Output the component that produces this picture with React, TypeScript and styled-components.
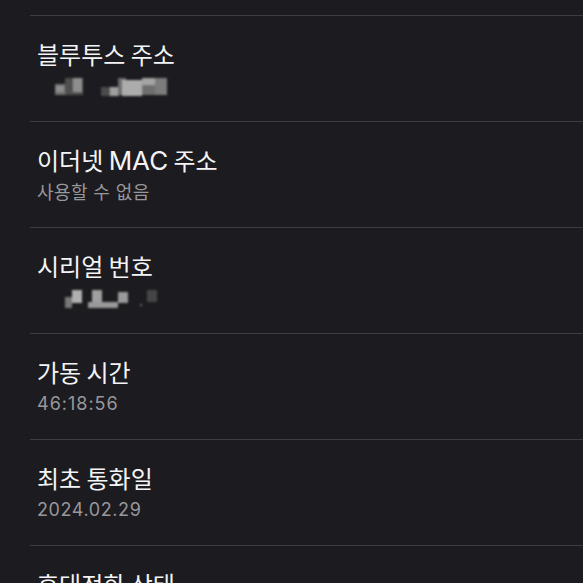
import styled, { createGlobalStyle } from 'styled-components';

const GlobalStyle = createGlobalStyle`
  html, body {
    margin: 0;
    padding: 0;
    background: #1c1b1f;
  }
  body {
    font-family: "Inter", "Noto Sans CJK KR", sans-serif;
    -webkit-font-smoothing: antialiased;
  }
`;

const Screen = styled.div`
  width: 583px;
  height: 583px;
  overflow: hidden;
  background: #1c1b1f;
`;

const List = styled.div`
  padding: 15px 0 0 30px;
  display: flex;
  flex-direction: column;
`;

const Row = styled.div`
  border-top: 1px solid #3d3c41;
  height: 105px;
  flex-shrink: 0;
  padding-left: 7px;
  display: flex;
  flex-direction: column;
`;

const Title = styled.div`
  margin-top: 22px;
  font-size: 24px;
  line-height: 32px;
  color: #f4f4f6;
  font-family: "Noto Sans CJK KR", sans-serif;
  white-space: nowrap;
`;

const Latin = styled.span`
  font-family: "Inter", sans-serif;
  font-size: 26px;
`;

const Value = styled.div<{ $spacing?: number }>`
  margin-top: 3px;
  font-size: 18px;
  line-height: 26px;
  letter-spacing: ${p => p.$spacing ?? 0.7}px;
  color: #98979c;
`;

const MosaicSvg = styled.svg`
  display: block;
  margin-top: 3px;
`;

type Block = [number, number, number, number, string];

const bluetoothBlocks: Block[] = [
  [18, 11, 11, 11, '#707070'],
  [19, 13, 8, 6, '#8e8e8e'],
  [28, 5, 18, 17, '#505050'],
  [36, 5, 9, 14, '#8e8e8e'],
  [64, 14, 10, 9, '#4c4c4c'],
  [73, 14, 9, 9, '#9e9e9e'],
  [81, 5, 8, 17, '#6c6c6c'],
  [85, 7, 20, 16, '#acacac'],
  [105, 5, 14, 7, '#a4a4a4'],
  [105, 12, 13, 10, '#6e6e6e'],
  [118, 5, 12, 17, '#7c7c7c'],
];

const serialBlocks: Block[] = [
  [28, 12, 7, 11, '#777777'],
  [35, 5, 10, 13, '#b0b0b0'],
  [55, 5, 10, 12, '#a0a0a0'],
  [51, 17, 30, 6, '#999999'],
  [81, 7, 10, 11, '#9a9a9a'],
  [110, 5, 10, 12, '#444444'],
  [103, 19, 2, 2, '#666666'],
];

const Mosaic = ({ blocks, id }: { blocks: Block[]; id: string }) => (
  <MosaicSvg width="140" height="26" viewBox="0 0 140 26">
    <defs>
      <filter id={id} x="-10%" y="-30%" width="120%" height="160%">
        <feGaussianBlur stdDeviation="0.8" />
      </filter>
    </defs>
    <g filter={`url(#${id})`}>
      {blocks.map(([x, y, w, h, c], i) => (
        <rect key={i} x={x} y={y} width={w} height={h} fill={c} />
      ))}
    </g>
  </MosaicSvg>
);

const App = () => {
  const rows = [
    { title: <>블루투스 주소</>, value: <Mosaic id="m1" blocks={bluetoothBlocks} /> },
    { title: <>이더넷 <Latin>MAC</Latin> 주소</>, value: <Value $spacing={0.4}>사용할 수 없음</Value> },
    { title: <>시리얼 번호</>, value: <Mosaic id="m2" blocks={serialBlocks} /> },
    { title: <>가동 시간</>, value: <Value $spacing={1}>46:18:56</Value> },
    { title: <>최초 통화일</>, value: <Value $spacing={0.6}>2024.02.29</Value> },
    { title: <>휴대전화 상태</>, value: <Value>&nbsp;</Value> },
  ];

  return (
    <>
      <GlobalStyle />
      <Screen>
        <List>
          {rows.map((row, i) => (
            <Row key={i}>
              <Title>{row.title}</Title>
              {row.value}
            </Row>
          ))}
        </List>
      </Screen>
    </>
  );
};

export default App;
